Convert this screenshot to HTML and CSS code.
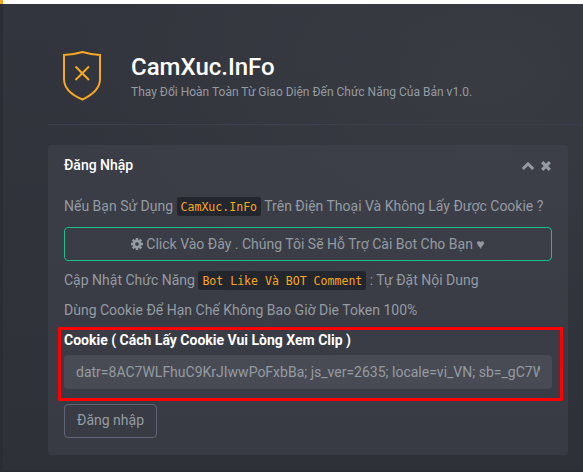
FILE: index.html
```html
<!DOCTYPE html>
<html lang="vi">
<head>
<meta charset="utf-8">
<title>CamXuc.InFo</title>
<link rel="stylesheet" href="styles.css">
</head>
<body>
<div class="loading-bar"><div class="loading-progress"></div></div>
<main class="content">
  <header class="view-header">
    <svg class="shield" width="42" height="52" viewBox="0 0 42 52" fill="none" stroke="#f6a821" stroke-width="2">
      <path d="M2 5Q12 4.5 20.5 2Q29 4.5 38 5V29C38 40 28 46 20.5 49.5C12 46 2 40 2 29Z"/>
      <path d="M13.5 16.5L27 30M27 16.5L13.5 30"/>
    </svg>
    <div class="header-title">
      <h1>CamXuc.InFo</h1>
      <small>Thay Đổi Hoàn Toàn Từ Giao Diện Đến Chức Năng Của Bản v1.0.</small>
    </div>
  </header>
  <section class="panel">
    <div class="panel-heading">
      <h2>Đăng Nhập</h2>
      <div class="panel-tools">
        <svg width="14" height="10" viewBox="0 0 14 10"><path d="M1.8 8L7 2.8L12.2 8" fill="none" stroke="#949ba2" stroke-width="3"/></svg>
        <svg width="10" height="10" viewBox="0 0 10 10"><path d="M1.2 1.2L8.8 8.8M8.8 1.2L1.2 8.8" stroke="#949ba2" stroke-width="3.2"/></svg>
      </div>
    </div>
    <p class="device-note">Nếu Bạn Sử Dụng <code>CamXuc.InFo</code> Trên Điện Thoại Và Không Lấy Được Cookie ?</p>
    <a class="btn btn-help">
      <svg class="gear" width="12" height="12" viewBox="0 0 12 12"><g fill="none" stroke="#949ba2"><circle cx="6" cy="6" r="3.15" stroke-width="2.6"/><path d="M6 0V2M6 10V12M0 6H2M10 6H12M1.7 1.7L3.1 3.1M8.9 8.9L10.3 10.3M10.3 1.7L8.9 3.1M3.1 8.9L1.7 10.3" stroke-width="2.5"/></g></svg>
      <span>Click Vào Đây . Chúng Tôi Sẽ Hỗ Trợ Cài Bot Cho Bạn ♥</span>
    </a>
    <p class="feature-note">Cập Nhật Chức Năng <code>Bot Like Và BOT Comment</code> : Tự Đặt Nội Dung</p>
    <p class="token-note">Dùng Cookie Để Hạn Chế Không Bao Giờ Die Token 100%</p>
    <form class="login">
      <label for="cookie">Cookie ( Cách Lấy Cookie Vui Lòng Xem Clip )</label>
      <input id="cookie" type="text" value="datr=8AC7WLFhuC9KrJIwwPoFxbBa; js_ver=2635; locale=vi_VN; sb=_gC7WLFhuC9KrJ">
      <button class="btn btn-login" type="button">Đăng nhập</button>
      <div class="highlight"></div>
    </form>
  </section>
</main>
</body>
</html>
```
FILE: styles.css
```css
* { box-sizing: border-box; }

body {
  margin: 0;
  height: 472px;
  overflow: hidden;
  background: #2b2d35;
  color: #949ba2;
  font: 14px/20px Roboto, "Liberation Sans", sans-serif;
}

.loading-bar { height: 4px; background: #fff; }
.loading-progress { width: 3px; height: 4px; background: #f6a821; }

.content {
  height: 466px;
  margin-left: 3px;
  padding: 41px 0 0 45px;
  background:
    radial-gradient(ellipse 440px 300px at 480px 70px, #393b43 0%, rgba(57, 59, 67, 0) 100%),
    linear-gradient(#33353e, #2f3139);
}

.view-header {
  display: flex;
  height: 80px;
  margin-bottom: 20px;
  padding-left: 14px;
  border-bottom: 1px solid #3d404c;
}

.shield { flex: none; margin-top: 5px; }
.header-title { margin: 7px 0 0 27px; }
h1 { margin: 0; color: #fff; font-size: 24px; line-height: 30px; font-weight: 500; }
small { display: block; font-size: 12px; line-height: 20px; white-space: nowrap; }

.panel {
  width: 520px;
  height: 310px;
  padding: 10px 16px 0;
  border-radius: 3px;
  background: rgba(68, 70, 79, .5);
}

.panel-heading { display: flex; justify-content: space-between; height: 41px; }
h2 { margin: 0; color: #fff; font-size: 14px; line-height: 20px; font-weight: 500; }
.panel-tools { display: flex; gap: 6px; padding: 6px 1px 0 0; }

p { height: 20px; margin: 0; white-space: nowrap; }
.device-note { margin-bottom: 11px; }
.feature-note { margin: 9px 0 10px; }
.token-note { margin-bottom: 10px; }

code {
  display: inline-block;
  height: 19px;
  padding: 0 4px;
  border-radius: 3px;
  background: #24262d;
  color: #f6a821;
  font: 11.55px/20px "DejaVu Sans Mono", monospace;
  vertical-align: top;
  margin-top: 1px;
}

.btn {
  height: 34px;
  border: 1px solid #616779;
  border-radius: 4px;
  background: transparent;
  color: #949ba2;
  font: inherit;
}

.btn-help {
  display: flex;
  align-items: center;
  justify-content: center;
  gap: 3px;
  border-color: #1bbf89;
}

.login { position: relative; }
label { display: block; height: 25px; color: #fff; font-weight: 700; }

input {
  display: block;
  width: 100%;
  height: 34px;
  margin-bottom: 15px;
  padding: 6px 12px;
  border: 0;
  border-radius: 4px;
  background: #494b54;
  color: #949ba2;
  font: inherit;
}

.btn-login { display: block; width: 93px; padding: 0 0 2px; border-color: #616379; }

.highlight {
  position: absolute;
  top: -3px;
  left: -6px;
  width: 505px;
  height: 74px;
  border: 3px solid #f00;
  border-radius: 1px;
  pointer-events: none;
}
```
